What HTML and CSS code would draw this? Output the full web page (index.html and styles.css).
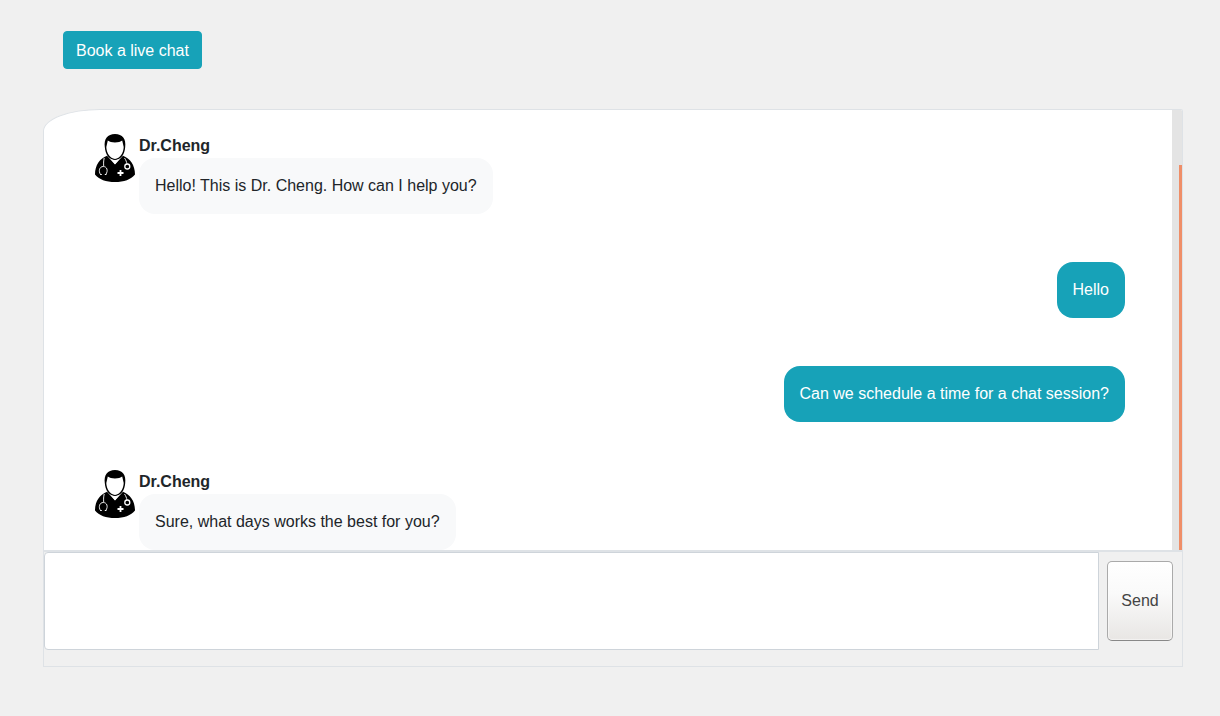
FILE: index.html
```
<!DOCTYPE html>
<html lang="en">
<head>
<meta charset="utf-8">
<meta name="viewport" content="width=device-width, initial-scale=1">
<title>Chat with Dr. Cheng</title>
<link rel="stylesheet" href="styles.css">
</head>
<body>
<svg class="defs" aria-hidden="true">
  <symbol id="doctor" viewBox="0 0 40 48">
    <path d="M9.800 13C8.800 5 12.500 0 20 0s11.200 5 10.200 13C29.800 20 26 26 20 26S10.200 20 9.800 13Z" fill="#000"/>
    <path d="M11.300 13L12.800 6.500C15.500 9 24.500 9 27.200 6.500L28.700 13C28.600 18.500 25 24.900 20 24.900S11.400 18.500 11.300 13Z" fill="#fff"/>
    <path d="M12 21.800C5 24.500 0 31 0 40.500C4 45.500 11 48 20 48S36 45.500 40 40.500C40 31 35 24.500 28 21.800L20 30.500Z" fill="#000"/>
    <path d="M14.500 23.500L20 30.300L25.500 23.500C22 27 18 27 14.500 23.500Z" fill="#fff"/>
    <path d="M9.200 24C8.500 27 8.500 29 8.700 32M5.500 40.500C3.200 37 4.500 32.500 8.200 32.500S13.500 36.500 10.800 40.500M29.500 24C31 26 31.500 28 32 30" fill="none" stroke="#fff" stroke-width=".9"/>
    <path d="M5.200 40.500H6.800M9.800 40.500H11.400" stroke="#fff" stroke-width="1.200"/>
    <circle cx="32.300" cy="32.500" r="2.500" fill="none" stroke="#fff" stroke-width="1.300"/>
    <path d="M25.500 36V42M22.500 39H28.500" stroke="#fff" stroke-width="1.800"/>
  </symbol>
</svg>
<main class="page">
  <div class="toolbar"><button class="btn-book" type="button">Book a live chat</button></div>
  <section class="chat-box" aria-label="Conversation">
    <div class="messages">
      <article class="message">
        <svg class="avatar" role="img" aria-label="Doctor"><use href="#doctor"/></svg>
        <div><div class="name">Dr.Cheng</div><p class="bubble">Hello! This is Dr. Cheng. How can I help you?</p></div>
      </article>
      <p class="bubble bubble-own">Hello</p>
      <p class="bubble bubble-own">Can we schedule a time for a chat session?</p>
      <article class="message">
        <svg class="avatar" role="img" aria-label="Doctor"><use href="#doctor"/></svg>
        <div><div class="name">Dr.Cheng</div><p class="bubble">Sure, what days works the best for you?</p></div>
      </article>
    </div>
    <div class="track"><div class="thumb"></div></div>
  </section>
  <form class="composer">
    <textarea class="input" aria-label="Message"></textarea>
    <button class="btn-send" type="button">Send</button>
  </form>
</main>
</body>
</html>
```
FILE: styles.css
```
* { box-sizing: border-box; }
body {
  margin: 0;
  background: #f0f0f0;
  color: #212529;
  font: 16px/24px "Liberation Sans", Arial, sans-serif;
}
button, textarea { font: inherit; }
.defs { position: absolute; width: 0; height: 0; }
.page { padding: 31px 37px 48px 43px; }
.toolbar { padding: 0 20px 40px; display: flex; }
.btn-book {
  padding: 7px 12px 5px;
  border: 1px solid #17a2b8;
  border-radius: 4px;
  background: #17a2b8;
  color: #fff;
}
.chat-box {
  display: flex;
  overflow: hidden;
  border: 1px solid #dee2e6;
  border-radius: 5% 2px 0 0;
  background: #fff;
}
.messages {
  flex: 1;
  display: flex;
  flex-direction: column;
  gap: 48px;
  padding: 24px 47px 0 51px;
}
.message { display: flex; gap: 4px; align-items: flex-start; }
.avatar { width: 40px; height: 48px; flex: none; }
.name { font-weight: bold; }
.bubble {
  width: fit-content;
  margin: 0;
  padding: 16px;
  border-radius: 16px;
  background: #f8f9fa;
}
.bubble-own { align-self: flex-end; background: #17a2b8; color: #fff; }
.track {
  display: flex;
  justify-content: flex-end;
  width: 10px;
  padding-top: 55px;
  background: #e4e4e4;
}
.thumb { width: 3px; background: #ef8e68; }
.composer {
  display: flex;
  align-items: center;
  gap: 8px;
  padding: 0 9px 16px 0;
  border: 1px solid #dee2e6;
}
.input {
  flex: 1;
  height: 98px;
  padding: 6px 12px;
  border: 1px solid #ced4da;
  border-radius: 4px 0 0 4px;
  background: #fff;
  color: #495057;
  resize: none;
}
.btn-send {
  min-width: 66px;
  height: 80px;
  padding: 6px 12px;
  border: 1px solid #aaa;
  border-bottom-color: #888;
  border-radius: 5px;
  background: linear-gradient(#fff, #fafafa 40%, #e8e6e4);
  box-shadow: inset 0 0 1px 1px #fff8;
  color: #444;
}
```
